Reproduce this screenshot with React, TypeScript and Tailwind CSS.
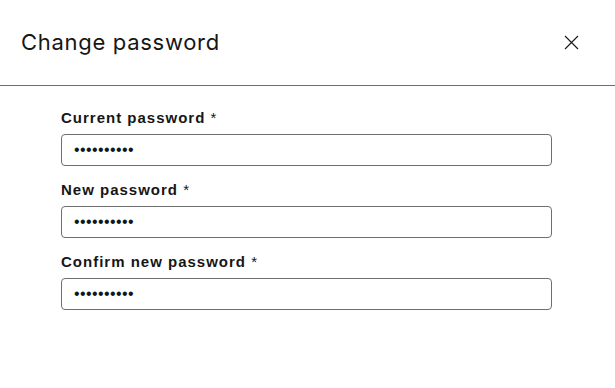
import { useState } from "react";

function CloseIcon() {
  return (
    <svg width="15" height="15" viewBox="0 0 15 15" fill="none" stroke="#161616" strokeWidth="1.1">
      <path d="M1 1 L14 14 M14 1 L1 14" />
    </svg>
  );
}

function PasswordField({ label, value }: { label: string; value: string }) {
  const [v, setV] = useState(value);
  return (
    <label className="flex flex-col">
      <span className="h-5 text-[15px] leading-5 font-bold tracking-[1px] text-[#161616]">
        {label} <span className="font-normal">*</span>
      </span>
      <input
        type="password"
        value={v}
        onChange={(e) => setV(e.target.value)}
        className="mt-1.5 h-8 w-[491px] rounded-[4px] border border-[#6f6f6f] bg-white px-3 font-['Liberation_Sans',Arial,sans-serif] text-[16px] tracking-[0.4px] text-[#161616] outline-none"
      />
    </label>
  );
}

export default function App() {
  return (
    <div className="h-[388px] w-[615px] bg-white font-['Liberation_Sans',Arial,sans-serif]">
      <div className="flex h-[86px] items-center justify-between border-b border-[#6f6f6f] pl-[21px] pr-[28px]">
        <h2 className="pb-px font-['Inter',sans-serif] text-[22px] font-normal tracking-[0.7px] text-[#161616]">
          Change password
        </h2>
        <button className="flex h-8 w-8 items-center justify-center">
          <CloseIcon />
        </button>
      </div>
      <div className="flex flex-col gap-[14px] pl-[61px] pt-[22px]">
        <PasswordField label="Current password" value="password12" />
        <PasswordField label="New password" value="password34" />
        <PasswordField label="Confirm new password" value="password34" />
      </div>
    </div>
  );
}
